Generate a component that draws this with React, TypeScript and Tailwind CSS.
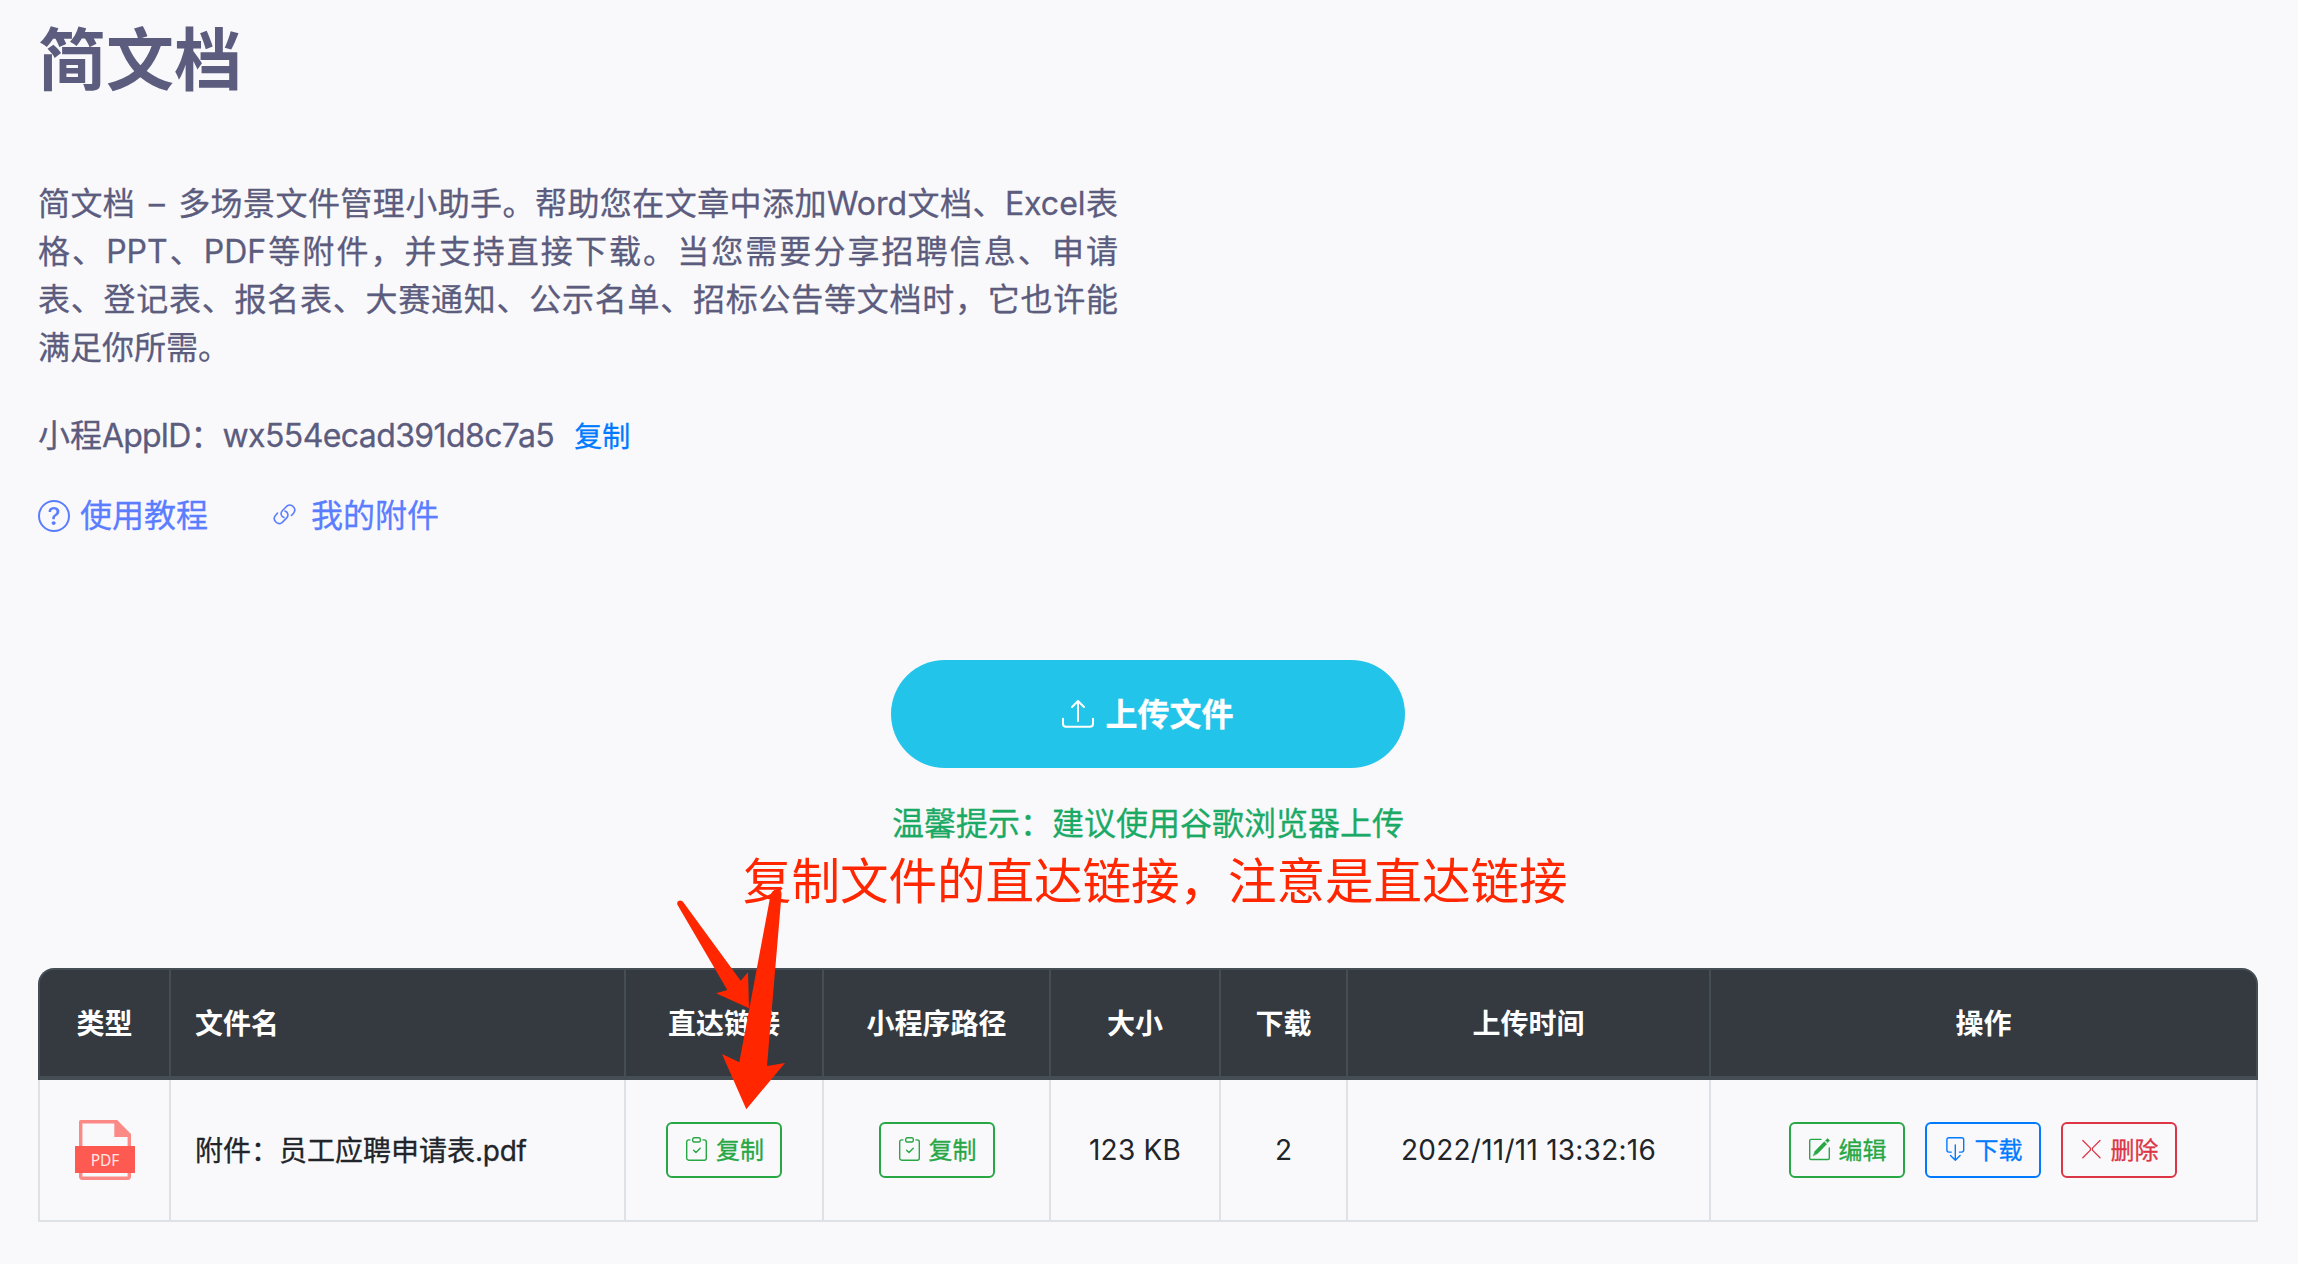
import React from 'react';
import { BsQuestionCircle, BsUpload } from 'react-icons/bs';

const intro = [
  '简文档 – 多场景文件管理小助手。帮助您在文章中添加Word文档、Excel表',
  '格、PPT、PDF等附件，并支持直接下载。当您需要分享招聘信息、申请',
  '表、登记表、报名表、大赛通知、公示名单、招标公告等文档时，它也许能',
  '满足你所需。'
];

const columns = [
  { label: '类型', className: 'w-[131px] text-center' },
  { label: '文件名', className: 'w-[455px] pl-6 text-left' },
  { label: '直达链接', className: 'w-[198px] text-center' },
  { label: '小程序路径', className: 'w-[227px] text-center' },
  { label: '大小', className: 'w-[170px] text-center' },
  { label: '下载', className: 'w-[127px] text-center' },
  { label: '上传时间', className: 'w-[363px] text-center' },
  { label: '操作', className: 'w-[549px] text-center border-r-2' }
];

const tones = {
  green: 'border-[#28a745] text-[#28a745]',
  blue: 'border-[#007bff] text-[#007bff]',
  red: 'border-[#dc3545] text-[#dc3545]'
};

interface ActionButtonProps {
  tone: keyof typeof tones;
  icon: React.ReactNode;
  label: string;
}

const ActionButton: React.FC<ActionButtonProps> = ({ tone, icon, label }) => (
  <button className={`flex h-14 w-[116px] items-center justify-center gap-2 rounded-md border-2 text-2xl leading-none ${tones[tone]}`}>
    {icon}
    <span className="pt-px">{label}</span>
  </button>
);

const Icon: React.FC<{ children: React.ReactNode }> = ({ children }) => (
  <svg
    className="mb-0.5 shrink-0"
    width="24"
    height="24"
    viewBox="0 0 24 24"
    fill="none"
    stroke="currentColor"
    strokeWidth="1.4"
    strokeLinecap="round"
    strokeLinejoin="round"
  >
    {children}
  </svg>
);

const LinkIcon = () => (
  <Icon>
    <path
      d="M18.500 12.500L20.500 10.200A4.900 4.900 0 0 0 14 3L9.500 7.500C7 10 8 13.500 11 14.500M4.500 10.100L2.500 12.400A4.900 4.900 0 0 0 9 19.600L13.500 15.100C16 12.600 15 9.100 12 8.100"
      strokeWidth="1.6"
    />
  </Icon>
);

const CopyIcon = () => (
  <Icon>
    <path d="M5.900 2.900H4.700A2 2 0 0 0 2.700 4.900V21.200A2 2 0 0 0 4.700 23.200H20.300A2 2 0 0 0 22.300 21.200V4.900A2 2 0 0 0 20.300 2.900H18.900" />
    <rect x="8.700" y="0.700" width="7.600" height="4.300" rx="1.500" />
    <path d="M9.600 13.200L12 15.600L16.200 11.300" />
  </Icon>
);

const EditIcon = () => (
  <Icon>
    <path d="M14 2.400H4A1.300 1.300 0 0 0 2.700 3.700V21.200A1.300 1.300 0 0 0 4 22.500H21A1.300 1.300 0 0 0 22.300 21.200V11" />
    <path d="M6.300 18.600L8 14.200L17.200 4.700L19.700 7.100L10.600 16.500Z" fill="currentColor" strokeWidth=".5" />
    <path d="M18.500 3.500L20.500 1.400L22.700 3.500L20.700 5.600Z" fill="currentColor" strokeWidth=".5" />
  </Icon>
);

const DownloadIcon = () => (
  <Icon>
    <path d="M8.300 15.100H5.900A2 2 0 0 1 3.900 13.100V2.700A2 2 0 0 1 5.900 .7H18.700A2 2 0 0 1 20.700 2.700V13.100A2 2 0 0 1 18.700 15.100H16.400" />
    <path d="M12.300 8V23.200M7.500 18.600L12.300 23.200L17.100 18.600" />
  </Icon>
);

const DeleteIcon = () => (
  <Icon>
    <path d="M3.800 3.500L11.400 11.100V13.100L3.800 20.700M21 3.500L13.400 11.100V13.100L21 20.700" strokeWidth="1.300" />
  </Icon>
);

const PdfIcon = () => (
  <svg width="60" height="60" viewBox="0 0 60 60">
    <path d="M5.700 1.700H41L54.300 15.500V57A1.500 1.500 0 0 1 53 58.300H7A1.500 1.500 0 0 1 5.700 57Z" fill="none" stroke="#fb8a86" strokeWidth="3.400" strokeLinejoin="round" />
    <path d="M39.300 0H42L56 14V17H39.300Z" fill="#fb8a86" />
    <rect y="26" width="60" height="27" fill="#ff5a52" />
    <text x="30" y="45.500" textAnchor="middle" className="font-['Noto_Sans',sans-serif] [-webkit-text-stroke:0]" fontSize="15.500" fill="#ffe6e4">PDF</text>
  </svg>
);

export default function App() {
  return (
    <div className="relative h-[1264px] w-[2298px] overflow-hidden bg-[#f9f9fc] px-[38px] font-['Inter','Noto_Sans_CJK_SC',sans-serif] text-[#212529] [-webkit-text-stroke:0.3px]">
      <header className="text-[32px] leading-[48px] text-[#5c5c7e]">
        <h1 className="pt-5 text-[68px] font-bold leading-[80px] [-webkit-text-stroke:0]">简文档</h1>
        <div className="w-[1080px] pt-20">
          {intro.map((line, i) => (
            <p key={line} className={i === 0 ? 'whitespace-nowrap [text-align-last:justify] [word-spacing:4px]' : i < 3 ? 'whitespace-nowrap [text-align-last:justify]' : ''}>{line}</p>
          ))}
        </div>
        <div className="mt-10 flex items-center">
          <span>小程<span className="tracking-[-0.9px]">AppID</span>：<span className="tracking-[-0.6px]">wx554ecad391d8c7a5</span></span>
          <a className="ml-5 pt-0.5 text-[28px] leading-[46px] text-[#007bff]">复制</a>
        </div>
        <nav className="mt-8 flex items-center text-[#5b7dff]">
          <BsQuestionCircle className="mr-[10px]" size={32} />
          <a className="mr-[65px]">使用教程</a>
          <LinkIcon />
          <a className="ml-[14px]">我的附件</a>
        </nav>
      </header>

      <section className="flex flex-col items-center pr-0.5 pt-[120px]">
        <button className="flex h-[108px] w-[514px] items-center justify-center gap-[11px] rounded-full bg-[#23c4ea] text-[32px] font-bold text-white">
          <BsUpload size={32} />
          <span className="pt-px">上传文件</span>
        </button>
        <p className="pt-8 text-[32px] leading-[48px] text-[#1aaa66]">温馨提示：建议使用谷歌浏览器上传</p>
      </section>

      <table className="mt-[120px] w-[2220px] table-fixed border-separate border-spacing-0 text-[28px]">
        <thead>
          <tr className="h-[112px]">
            {columns.map((col) => (
              <th
                key={col.label}
                className={`border-b-4 border-l-2 border-t-2 border-[#454d55] bg-[#343a40] pt-0.5 font-bold text-white [-webkit-text-stroke:0] first:rounded-tl-2xl last:rounded-tr-2xl ${col.className}`}
              >
                {col.label}
              </th>
            ))}
          </tr>
        </thead>
        <tbody>
          <tr className="h-[142px] text-center [&>td]:border-b-2 [&>td]:border-l-2 [&>td]:border-[#dee2e6]">
            <td><div className="flex justify-center"><PdfIcon /></div></td>
            <td className="pl-6 pt-px text-left">附件：员工应聘申请表<span className="tracking-[-0.3px]">.pdf</span></td>
            <td><div className="flex justify-center"><ActionButton tone="green" icon={<CopyIcon />} label="复制" /></div></td>
            <td><div className="flex justify-center"><ActionButton tone="green" icon={<CopyIcon />} label="复制" /></div></td>
            <td className="tracking-[0.2px] [-webkit-text-stroke:0]">123 KB</td>
            <td className="[-webkit-text-stroke:0]">2</td>
            <td className="tracking-[0.24px] [-webkit-text-stroke:0]">2022/11/11 13:32:16</td>
            <td className="border-r-2">
              <div className="flex justify-center gap-5 pr-0.5">
                <ActionButton tone="green" icon={<EditIcon />} label="编辑" />
                <ActionButton tone="blue" icon={<DownloadIcon />} label="下载" />
                <ActionButton tone="red" icon={<DeleteIcon />} label="删除" />
              </div>
            </td>
          </tr>
        </tbody>
      </table>

      {/* 标注文字和箭头 */}
      <p className="absolute left-[743px] top-[846px] whitespace-nowrap text-[48.5px] leading-[72px] text-[#ff2600] [-webkit-text-stroke:0]">
        复制文件的直达链接，注意是直达链接
      </p>
      <svg className="absolute left-[670px] top-[885px]" width="120" height="230" viewBox="670 885 120 230" fill="#ff2600">
        <path d="M677.300 904.500Q676.500 901 680 900.500Q682.500 900.700 683.500 902.500L740.700 980.700L748 972.300L749 1008.300L716 993.300L727.300 990Z" />
        <path d="M770 898Q771 890 777 889.300Q782 889.500 781.500 895L767 1066L785 1063L746.300 1109.300L722 1054L739.300 1062.300Z" />
      </svg>
    </div>
  );
}
